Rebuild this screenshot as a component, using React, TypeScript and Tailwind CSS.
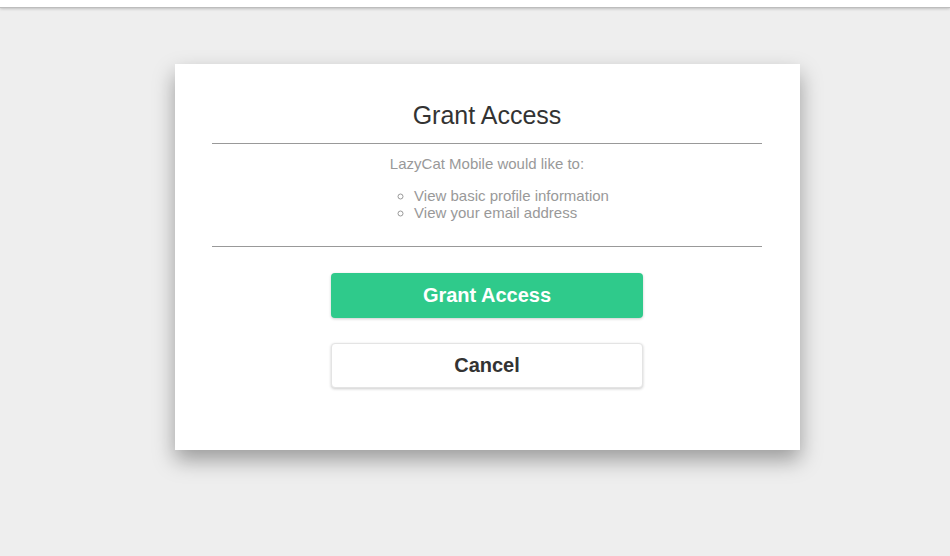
export default function App() {
  return (
    <div className="min-h-[556px] bg-[#eeeeee] font-['Liberation_Sans',Arial,sans-serif]">
      <div className="h-2 bg-white border-b border-[#bdbdbd] shadow-[0_1px_3px_rgba(0,0,0,0.2)]" />

      <div className="pl-[25px]">
        <div className="mx-auto mt-[56px] h-[386px] w-[625px] bg-white pl-[37px] pr-[38px] pt-[37px] shadow-[0_10px_20px_rgba(0,0,0,0.35)]">
          <h1 className="text-center text-[25px] leading-7 text-[#333]">Grant Access</h1>
          <hr className="mt-[14px] border-t border-[#999]" />

          <div className="text-center text-[15px] leading-4 text-[#999]">
            <p className="mt-3">LazyCat Mobile would like to:</p>
            <ul className="mt-[15px] inline-block list-[circle] pl-[49px] text-left leading-[17px]">
              <li>View basic profile information</li>
              <li>View your email address</li>
            </ul>
          </div>

          <hr className="mt-[25px] border-t border-[#999]" />

          <div className="mt-[26px] flex flex-col items-center gap-[25px]">
            <button className="h-[45px] w-[312px] rounded-[4px] bg-[#2fca8b] pb-[2px] text-[20px] font-bold text-white shadow-[0_1px_3px_rgba(0,0,0,0.2)]">
              Grant Access
            </button>
            <button className="h-[45px] w-[312px] rounded-[4px] border border-[#e4e4e4] bg-white pb-[2px] text-[20px] font-bold text-[#333] shadow-[0_1px_3px_rgba(0,0,0,0.2)]">
              Cancel
            </button>
          </div>
        </div>
      </div>
    </div>
  );
}
